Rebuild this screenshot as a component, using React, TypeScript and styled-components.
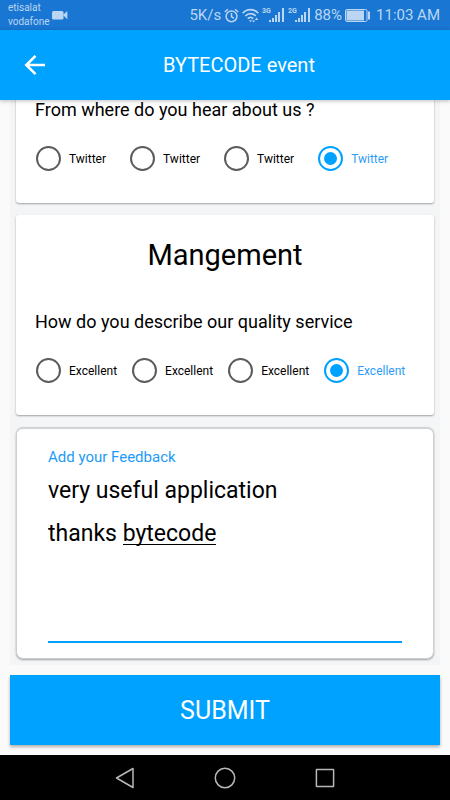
import React, { useState } from "react";
import styled, { createGlobalStyle } from "styled-components";

const blue = "#00a2ff";

const GlobalStyle = createGlobalStyle`
  *, *::before, *::after { box-sizing: border-box; }
  body { margin: 0; background: #fafafa; }
  body, button, input, textarea { font-family: Roboto, "Liberation Sans", sans-serif; }
`;

const Screen = styled.div`
  display: flex;
  flex-direction: column;
  height: 100vh;
  overflow: hidden;
  color: #000;
`;

const StatusBar = styled.div`
  display: flex;
  flex: none;
  align-items: center;
  justify-content: space-between;
  height: 30px;
  padding: 0 10px 0 8px;
  background: #1976d2;
  color: #bbd6f2;
`;

const StatusGroup = styled.div<{ $gap: number }>`
  display: flex;
  align-items: center;
  gap: ${(p) => p.$gap}px;
  white-space: nowrap;
`;

const Carriers = styled.div`
  font-size: 10px;
  line-height: 14px;
`;

const StatusText = styled.span`
  font-size: 15px;
  line-height: 20px;
`;

const Clock = styled(StatusText)`
  margin-left: 2px;
`;

const AppBar = styled.header`
  position: relative;
  z-index: 1;
  display: grid;
  flex: none;
  grid-template-columns: 70px 1fr 42px;
  align-items: center;
  height: 70px;
  background: ${blue};
  color: #fff;
  box-shadow: 0 1px 4px rgba(0, 0, 0, 0.25);
`;

const BackButton = styled.button`
  display: flex;
  justify-content: center;
  padding: 8px 0;
  border: 0;
  background: none;
  color: inherit;
`;

const Title = styled.h1`
  margin: 0;
  font-size: 20px;
  font-weight: 400;
  line-height: 28px;
  text-align: center;
`;

const Panel = styled.main`
  display: flex;
  flex: 1;
  flex-direction: column;
  justify-content: flex-end;
  gap: 12px;
  min-height: 0;
  margin: 0 10px;
  padding: 0 6px 6px;
  overflow: hidden;
  background: #f3f5f7;
`;

const Card = styled.section`
  flex: none;
  padding: 20px 19px;
  border-radius: 3px;
  background: #fff;
  box-shadow: 0 1px 2px rgba(0, 0, 0, 0.35);
`;

const CardTitle = styled.h2`
  margin: 0 0 35px;
  font-size: 29px;
  font-weight: 400;
  line-height: 40px;
  text-align: center;
`;

const Group = styled.fieldset`
  min-width: 0;
  margin: 0;
  padding: 0 0 12px;
  border: 0;
`;

const Question = styled.legend`
  padding: 0;
  font-size: 18px;
  line-height: 24px;
`;

const Options = styled.div<{ $gap: number }>`
  display: flex;
  gap: ${(p) => p.$gap}px;
  padding: 24px 0 0 1px;
`;

const Option = styled.label<{ $on: boolean }>`
  display: flex;
  align-items: center;
  gap: 8px;
  color: ${(p) => (p.$on ? "#2d9cf5" : "#000")};
  font-size: 12px;
  line-height: 16px;
`;

const Radio = styled.input`
  display: grid;
  place-content: center;
  width: 25px;
  height: 25px;
  margin: 0;
  border: 2px solid #5c5c5c;
  border-radius: 50%;
  appearance: none;

  &:checked { border-color: ${blue}; }
  &:checked::before {
    width: 13px;
    height: 13px;
    border-radius: 50%;
    background: ${blue};
    content: "";
  }
`;

const FeedbackCard = styled(Card)`
  padding: 18px 31px 15px;
  border: 1px solid #cfcfcf;
  border-top: 2px solid #d3d4d5;
  border-radius: 7px;
`;

const FeedbackLabel = styled.label`
  display: block;
  color: #1c9bfa;
  font-size: 15px;
  line-height: 20px;
`;

const Editor = styled.div`
  display: grid;
  border-bottom: 2px solid ${blue};

  > * {
    grid-area: 1 / 1;
    width: 100%;
    height: 174px;
    margin: 0;
    padding: 2px 0 0;
    border: 0;
    background: none;
    font-size: 23px;
    line-height: 43px;
    white-space: pre-wrap;
  }
`;

const SpellingMarks = styled.div`
  visibility: hidden;
`;

const SpellingMark = styled.span`
  position: relative;

  &::after {
    position: absolute;
    inset: auto 0 2px;
    height: 1px;
    background: #000;
    content: "";
    visibility: visible;
  }
`;

const TextArea = styled.textarea`
  display: block;
  color: #000;
  outline: 0;
  resize: none;
`;

const Submit = styled.button`
  flex: none;
  height: 70px;
  margin: 10px;
  border: 0;
  background: ${blue};
  box-shadow: 0 2px 3px rgba(0, 0, 0, 0.3);
  color: #fff;
  font-size: 25px;
`;

const NavBar = styled.nav`
  display: flex;
  flex: none;
  align-items: center;
  justify-content: center;
  gap: 76px;
  height: 45px;
  background: #000;
`;

const NavButton = styled.button`
  display: flex;
  padding: 0;
  border: 0;
  background: none;
`;

const Signal = ({ label }: { label: string }) => (
  <svg width="23" height="16" viewBox="0 0 23 16" fill="currentColor" aria-hidden="true">
    <text x="0" y="6" fontSize="7" fontWeight="700" fontFamily="Roboto, sans-serif">{label}</text>
    <rect x="7" y="13" width="2" height="2" />
    <rect x="10" y="11" width="2" height="4" />
    <rect x="13" y="8" width="2" height="7" />
    <rect x="16" y="5" width="2" height="10" />
    <rect x="20" y="1" width="2" height="14" />
  </svg>
);

const CameraIcon = () => (
  <svg width="16" height="10" viewBox="0 0 16 10" fill="currentColor" aria-hidden="true">
    <rect x="0" y="1" width="11.5" height="8.5" rx="1.5" />
    <path d="M11 5 15.3 1v8.3z" />
  </svg>
);

const AlarmIcon = () => (
  <svg width="15" height="15" viewBox="0 0 15 15" fill="none" stroke="currentColor" strokeWidth="1.5" aria-hidden="true">
    <circle cx="7.5" cy="8.3" r="5.4" />
    <path d="M7.5 5v3.6l2.3 1.7M.8 4 4 1.2M14.2 4 11 1.2" />
  </svg>
);

const WifiIcon = () => (
  <svg width="17" height="15" viewBox="0 0 17 15" fill="none" stroke="currentColor" strokeWidth="1.7" aria-hidden="true">
    <path d="M.7 5.2C5 .5 12 .5 16.3 5.2M3.3 8c3-3.2 7.4-3.2 10.4 0M5.8 10.6c1.6-1.7 3.8-1.7 5.4 0" />
    <path d="M7 12.2h3l-1.5 2z" fill="currentColor" stroke="none" />
    <path d="M10 12.4h3.2l-1.6 2.2zM13 12l1.6-2.4 1.6 2.4z" fill="currentColor" stroke="none" />
  </svg>
);

const BatteryIcon = () => (
  <svg width="26" height="13" viewBox="0 0 26 13" fill="none" stroke="currentColor" aria-hidden="true">
    <rect x=".5" y=".5" width="21.5" height="12" rx="1.5" />
    <rect x="1.5" y="1.5" width="17.5" height="10" fill="currentColor" stroke="none" />
    <path d="M24 2.5v8" strokeWidth="2" />
  </svg>
);

type ChoiceProps = { name: string; question: string; option: string; gap: number };

function Choices({ name, question, option, gap }: ChoiceProps) {
  const [selected, setSelected] = useState(3);
  return (
    <Group>
      <Question>{question}</Question>
      <Options $gap={gap}>
        {[0, 1, 2, 3].map((i) => (
          <Option key={i} $on={selected === i}>
            <Radio type="radio" name={name} checked={selected === i} onChange={() => setSelected(i)} />
            {option}
          </Option>
        ))}
      </Options>
    </Group>
  );
}

function Feedback() {
  const [text, setText] = useState("very useful application\nthanks bytecode");
  return (
    <FeedbackCard>
      <FeedbackLabel htmlFor="feedback">Add your Feedback</FeedbackLabel>
      <Editor>
        <SpellingMarks aria-hidden="true">
          {text.split(/(bytecode)/).map((part, i) =>
            part === "bytecode" ? <SpellingMark key={i}>{part}</SpellingMark> : part
          )}
        </SpellingMarks>
        <TextArea id="feedback" spellCheck={false} value={text} onChange={(e) => setText(e.target.value)} />
      </Editor>
    </FeedbackCard>
  );
}

export default function App() {
  return (
    <>
      <GlobalStyle />
      <Screen>
        <StatusBar>
          <StatusGroup $gap={2}>
            <Carriers>
              <div>etisalat</div>
              <div>vodafone</div>
            </Carriers>
            <CameraIcon />
          </StatusGroup>
          <StatusGroup $gap={3}>
            <StatusText>5K/s</StatusText>
            <AlarmIcon />
            <WifiIcon />
            <Signal label="3G" />
            <Signal label="2G" />
            <StatusText>88%</StatusText>
            <BatteryIcon />
            <Clock>11:03 AM</Clock>
          </StatusGroup>
        </StatusBar>
        <AppBar>
          <BackButton type="button" aria-label="Back">
            <svg width="22" height="22" viewBox="0 0 22 22" fill="none" stroke="currentColor" strokeWidth="2.6" aria-hidden="true">
              <path d="M21 11H3M11.5 1.8 2.3 11l9.2 9.2" />
            </svg>
          </BackButton>
          <Title>BYTECODE event</Title>
        </AppBar>
        <Panel>
          <Card>
            <Choices name="source" question="From where do you hear about us ?" option="Twitter" gap={24} />
          </Card>
          <Card>
            <CardTitle>Mangement</CardTitle>
            <Choices name="quality" question="How do you describe our quality service" option="Excellent" gap={15} />
          </Card>
          <Feedback />
        </Panel>
        <Submit type="button">SUBMIT</Submit>
        <NavBar>
          <NavButton type="button" aria-label="Back">
            <svg width="24" height="24" viewBox="0 0 24 24" fill="none" stroke="#b8b8b8" strokeWidth="1.5" strokeLinejoin="round" aria-hidden="true">
              <path d="M20 2.5v19L3.5 12z" />
            </svg>
          </NavButton>
          <NavButton type="button" aria-label="Home">
            <svg width="24" height="24" viewBox="0 0 24 24" fill="none" stroke="#b8b8b8" strokeWidth="1.5" aria-hidden="true">
              <circle cx="12" cy="12" r="9.7" />
            </svg>
          </NavButton>
          <NavButton type="button" aria-label="Recent apps">
            <svg width="24" height="24" viewBox="0 0 24 24" fill="none" stroke="#b8b8b8" strokeWidth="1.5" aria-hidden="true">
              <rect x="3.4" y="3.4" width="17.2" height="17.2" rx=".5" />
            </svg>
          </NavButton>
        </NavBar>
      </Screen>
    </>
  );
}
